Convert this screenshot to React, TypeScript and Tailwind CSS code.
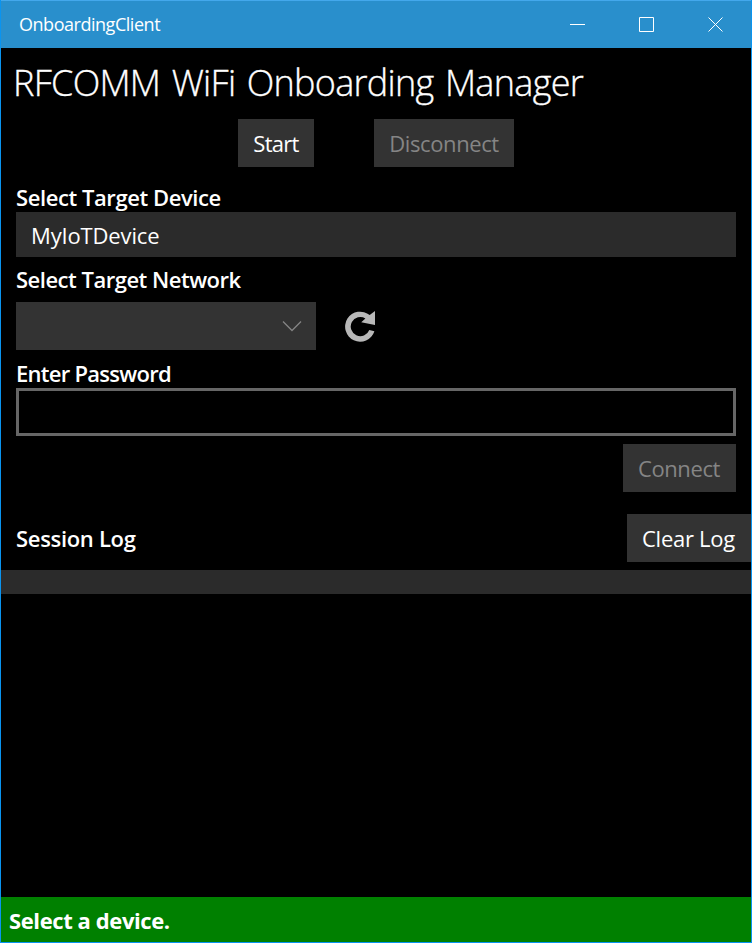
import React from "react";

const labelClass = "flex items-center text-[22px] leading-[30px] font-semibold";

const windowIcons = [
  "M0 7.5H15",
  "M0.5 0.5H14.5V14.5H0.5Z",
  "M0.5 0.5L14.5 14.5M14.5 0.5L0.5 14.5",
];

function TitleBar() {
  return (
    <header className="flex h-12 shrink-0 items-center justify-between border-t border-[#43a8ec] bg-[#298fcc] pr-[2px] pl-[18px]">
      <span className="pb-px text-[18px] leading-6 tracking-[-0.47px]">OnboardingClient</span>
      <div className="flex h-full">
        {windowIcons.map((d) => (
          <span key={d} className="flex w-[69px] items-center justify-center pl-px">
            <svg width="15" height="15" viewBox="0 0 15 15" fill="none" stroke="#fff" strokeWidth="1">
              <path d={d} />
            </svg>
          </span>
        ))}
      </div>
    </header>
  );
}

export default function App() {
  return (
    <div className="flex h-[943px] w-[752px] flex-col border-x border-b border-[#0a94f0] bg-black font-['Open_Sans','Noto_Sans',sans-serif] whitespace-nowrap text-white">
      <TitleBar />
      <h1 className="mt-[11px] ml-3 h-[47px] text-[36px] leading-[48px] font-light tracking-[-0.71px] [word-spacing:2.8px] [-webkit-text-stroke:0.35px_white]">
        RFCOMM WiFi Onboarding Manager
      </h1>
      <div className="mt-[13px] flex h-12 justify-center gap-[60px] text-[22px]">
        <button className="w-[76px] bg-[#333] tracking-[-0.7px]">Start</button>
        <button className="w-[140px] bg-[#333] tracking-[-0.39px] text-[#858585]">Disconnect</button>
      </div>

      <main className="mx-[15px] flex flex-col">
        <div className={`${labelClass} mt-[15px] h-[30px] tracking-[-0.42px]`}>Select Target Device</div>
        <div className="flex h-[45px] items-center bg-[#2b2b2b] pt-[2px] pl-[15px] text-[22px] tracking-[-0.15px]">
          MyIoTDevice
        </div>
        <div className={`${labelClass} mt-[7px] h-[30px] tracking-[-0.49px]`}>Select Target Network</div>
        <div className="mt-2 flex h-12">
          <div className="flex w-[300px] items-center justify-end bg-[#333] pr-[14px]">
            <svg width="20" height="12" viewBox="0 0 20 12" fill="none" stroke="#858585" strokeWidth="1.3">
              <path d="M1 1.5L10 10.5L19 1.5" />
            </svg>
          </div>
          <svg className="mt-[9px] ml-[29px]" width="32" height="31" viewBox="0 0 32 31" fill="#b8b8b8">
            <path d="M30 0V14L16.2 11.3L20.4 7.4A9.6 9.6 0 1 0 24.3 19L29.4 20.2A15 15 0 1 1 24.7 4.1Z" />
          </svg>
        </div>
        <div className={`${labelClass} mt-2 h-[30px] tracking-[-0.73px]`}>Enter Password</div>
        <div className="h-12 border-[3px] border-[#666]" />
        <button className="mt-2 h-12 w-[113px] self-end bg-[#333] pr-px text-[22px] tracking-[-0.38px] text-[#858585]">
          Connect
        </button>
      </main>

      <div className="mt-[22px] flex h-12 items-center justify-between pl-[15px]">
        <span className={`${labelClass} tracking-[-0.32px]`}>Session Log</span>
        <button className="h-12 w-[124px] bg-[#333] pr-px text-[22px] tracking-[-0.27px]">Clear Log</button>
      </div>
      <div className="mt-2 h-6 bg-[#2b2b2b]" />
      <footer className="mt-auto flex h-[45px] items-center bg-[#008000] pt-px pl-2 text-[22px] font-bold tracking-[-0.4px]">
        Select a device.
      </footer>
    </div>
  );
}
